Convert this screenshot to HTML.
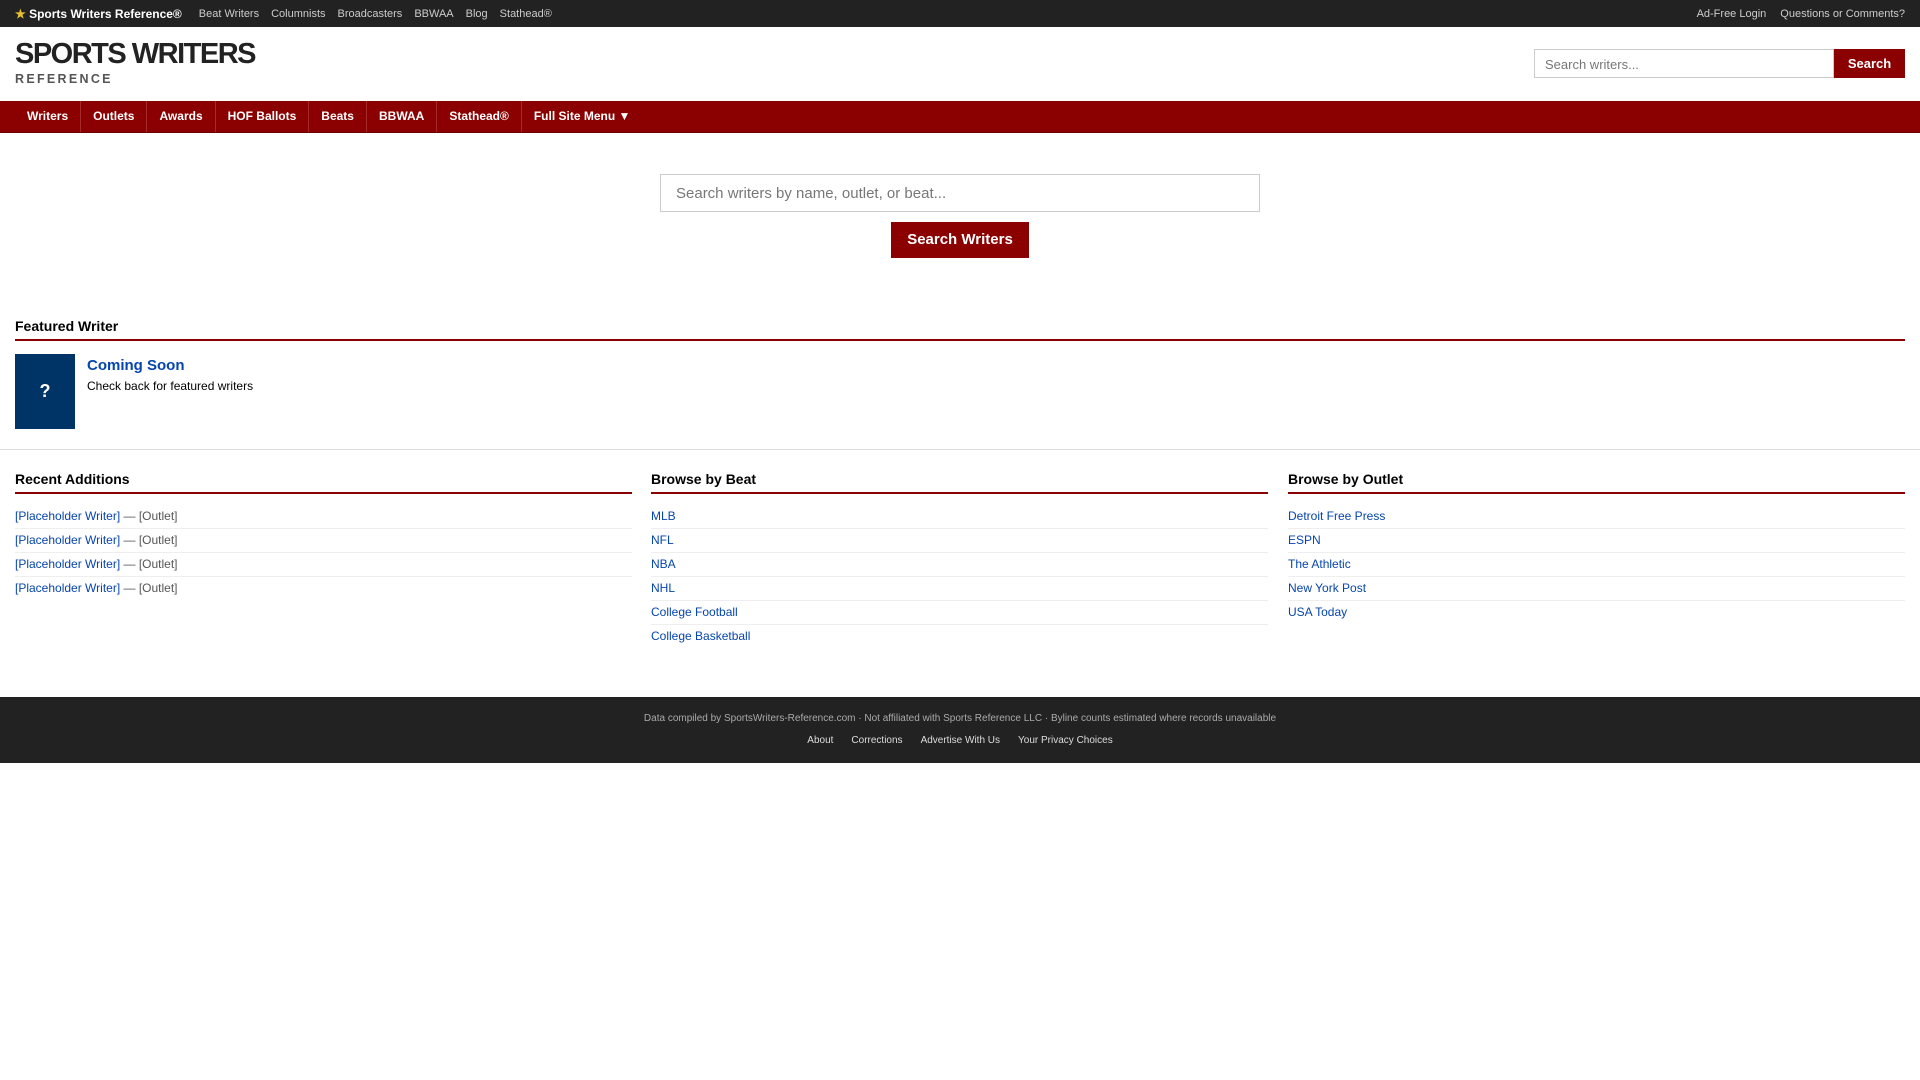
<!DOCTYPE html>
<html><head><meta charset="utf-8"><style>
*{box-sizing:border-box;margin:0;padding:0}
body{width:1920px;height:1080px;background:#fff;font-family:"Liberation Sans",Arial,sans-serif;color:#000;overflow:hidden;position:relative}
a{text-decoration:none}
.top{height:27px;background:#222;color:#ccc;font-size:11px;display:flex;align-items:center;padding:0 15px}
.top .brand{color:#fff;font-weight:bold;font-size:12px;margin-right:17px}
.top .brand span{color:#e6c12d}
.top a{color:#ccc;margin-right:12px}
.top .r{margin-left:auto}
.top .r a{margin-right:0;margin-left:14px}
.hdr{height:74px;position:relative}
.logo{position:absolute;left:15px;top:10px}
.logo .t{font-size:29px;font-weight:bold;letter-spacing:-1.5px;color:#222;line-height:34px}
.logo .s{font-size:12.5px;font-weight:bold;letter-spacing:2.3px;color:#555;margin-top:1px}
.hs{position:absolute;left:1534px;top:22px;display:flex}
.hs .i{width:300px;height:29px;border:1px solid #ccc;font-size:13px;color:#777;padding:7px 10px}
.hs .b{width:71px;height:29px;background:#8b0000;color:#fff;font-weight:bold;font-size:13px;text-align:center;line-height:29px}
.nav{height:32px;background:#8b0000;padding-left:15px;display:flex;border-bottom:1px solid #6a0000}
.nav a{color:#fff;font-weight:bold;font-size:12px;padding:0 12px;line-height:31px;border-right:1px solid #a52a2a}
.nav a:last-child{border-right:none}
.ms{position:absolute;left:660px;top:174px;width:600px;height:38px;border:1px solid #ccc;font-size:15px;color:#777;padding:10px 15px}
.mb{position:absolute;left:891px;top:222px;width:138px;height:36px;background:#8b0000;color:#fff;font-weight:bold;font-size:15px;text-align:center;line-height:36px}
h3{font-size:14px;font-weight:bold;border-bottom:2px solid #8b0000;padding-bottom:5px}
.fw{position:absolute;left:15px;top:318px;width:1890px}
.fbox{position:absolute;left:15px;top:354px;width:60px;height:75px;background:#003366;color:#fff;font-weight:bold;font-size:18px;text-align:center;line-height:75px}
.ct{position:absolute;left:87px;top:357px;color:#0645ad;font-weight:bold;font-size:15px}
.cd{position:absolute;left:87px;top:379px;font-size:12px}
.hr{position:absolute;left:0;top:449px;width:1920px;border-top:1px solid #ddd}
.col{position:absolute;top:471px;width:617px}
.col ul{list-style:none;margin-top:11px}
.col li{font-size:12px;line-height:23px;border-bottom:1px solid #eee;color:#555}
.col li:last-child{border-bottom:none}
.col li a{color:#0645ad}
.ft{position:absolute;left:0;top:697px;width:1920px;height:66px;background:#222;text-align:center}
.ft .a{color:#aaa;font-size:10px;margin-top:16px}
.ft .b{font-size:10px;margin-top:11px}
.ft .b a{color:#ddd;margin:0 9px}
</style></head><body>
<div class="top"><span class="brand"><span>★</span> Sports Writers Reference®</span><a>Beat Writers</a><a>Columnists</a><a>Broadcasters</a><a>BBWAA</a><a>Blog</a><a>Stathead®</a><div class="r"><a>Ad-Free Login</a><a>Questions or Comments?</a></div></div>
<div class="hdr"><div class="logo"><div class="t">SPORTS WRITERS</div><div class="s">REFERENCE</div></div>
<div class="hs"><div class="i">Search writers...</div><div class="b">Search</div></div></div>
<div class="nav"><a>Writers</a><a>Outlets</a><a>Awards</a><a>HOF Ballots</a><a>Beats</a><a>BBWAA</a><a>Stathead®</a><a>Full Site Menu ▼</a></div>
<div class="ms">Search writers by name, outlet, or beat...</div>
<div class="mb">Search Writers</div>
<div class="fw"><h3>Featured Writer</h3></div>
<div class="fbox">?</div>
<div class="ct">Coming Soon</div>
<div class="cd">Check back for featured writers</div>
<div class="hr"></div>
<div class="col" style="left:15px"><h3>Recent Additions</h3><ul>
<li><a>[Placeholder Writer]</a> — [Outlet]</li><li><a>[Placeholder Writer]</a> — [Outlet]</li><li><a>[Placeholder Writer]</a> — [Outlet]</li><li><a>[Placeholder Writer]</a> — [Outlet]</li></ul></div>
<div class="col" style="left:651px"><h3>Browse by Beat</h3><ul>
<li><a>MLB</a></li><li><a>NFL</a></li><li><a>NBA</a></li><li><a>NHL</a></li><li><a>College Football</a></li><li><a>College Basketball</a></li></ul></div>
<div class="col" style="left:1288px"><h3>Browse by Outlet</h3><ul>
<li><a>Detroit Free Press</a></li><li><a>ESPN</a></li><li><a>The Athletic</a></li><li><a>New York Post</a></li><li><a>USA Today</a></li></ul></div>
<div class="ft"><div class="a">Data compiled by SportsWriters-Reference.com · Not affiliated with Sports Reference LLC · Byline counts estimated where records unavailable</div>
<div class="b"><a>About</a><a>Corrections</a><a>Advertise With Us</a><a>Your Privacy Choices</a></div></div>
</body></html>
